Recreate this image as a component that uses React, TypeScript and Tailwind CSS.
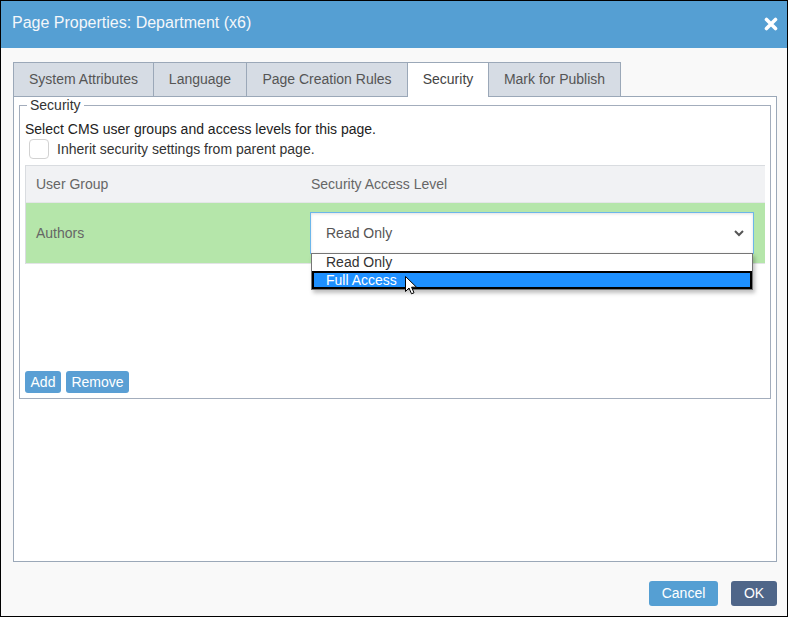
import React from "react"

const tabs = [
  { label: "System Attributes", w: "w-[140px]" },
  { label: "Language", w: "w-[93px]" },
  { label: "Page Creation Rules", w: "w-[161px]" },
  { label: "Security", w: "w-[81px]", active: true },
  { label: "Mark for Publish", w: "w-[133px]", last: true },
]

function Cursor() {
  return (
    <svg
      className="absolute left-[93px] top-[22px] z-20"
      width="13"
      height="19"
      viewBox="0 0 13 19"
    >
      <path
        d="M0.5 0.5 L0.5 15.5 L4 12 L6.5 17.8 L9 16.8 L6.6 11.2 L11.5 11.2 Z"
        fill="#fff"
        stroke="#000"
        strokeWidth="1"
        strokeLinejoin="round"
      />
    </svg>
  )
}

export default function App() {
  return (
    <div className="w-[788px] h-[617px] border border-black bg-[#f9f9f9] flex flex-col font-['Liberation_Sans',Arial,sans-serif] text-[14px]">
      {/* title bar */}
      <div className="h-[47px] shrink-0 bg-[#559fd3] flex items-start justify-between pl-[11px] pr-[9px] pt-[12px]">
        <span className="text-[16px] leading-[20px] text-[#f4f7fa]">
          Page Properties: Department (x6)
        </span>
        <svg className="mt-[4px]" width="14" height="14" viewBox="0 0 14 14">
          <path d="M2.5 2.5 L11.5 11.5 M11.5 2.5 L2.5 11.5" stroke="#fff" strokeWidth="3.6" strokeLinecap="round" />
        </svg>
      </div>

      <div className="flex-1 flex flex-col pl-[12px] pr-[10px] pt-[14px]">
        {/* tabs */}
        <div className="flex items-start h-[34px]">
          {tabs.map((t) => (
            <div
              key={t.label}
              className={
                t.active
                  ? `${t.w} h-[35px] relative z-10 bg-white border-t border-l border-[#9ba8b8] flex items-center justify-center pb-px text-[#444]`
                  : `${t.w} h-[34px] bg-[#d6dce4] border-t border-l border-[#9ba8b8] flex items-center justify-center text-[#555] ${t.last ? "border-r" : ""}`
              }
            >
              {t.label}
            </div>
          ))}
        </div>

        {/* panel */}
        <div className="h-[466px] border border-[#9ba8b8] bg-white px-[5px]">
          <fieldset className="border border-[#a3adbc] px-[5px] pb-[5px]">
            <legend className="ml-[2px] px-[3px] leading-[16px] text-[#333]">Security</legend>
            <div className="mt-[6px] h-[20px] leading-[20px] text-[#222]">
              Select CMS user groups and access levels for this page.
            </div>
            <div className="flex items-center h-[20px] pl-[4px] gap-[8px]">
              <div className="w-[20px] h-[20px] rounded-[4px] border border-[#d2d2d2] bg-white" />
              <span className="text-[#333]">Inherit security settings from parent page.</span>
            </div>

            {/* table */}
            <div className="mt-[6px] border-l border-t border-[#d9dce0]">
              <div className="h-[37px] bg-[#f1f2f4] flex items-center border-b border-[#e4e6e8] text-[#666]">
                <div className="w-[275px] pl-[10px]">User Group</div>
                <div className="pl-[10px]">Security Access Level</div>
              </div>
              <div className="h-[61px] bg-[#b5e6aa] flex items-start pt-[9px] border-b border-[#e2e4e6]">
                <div className="w-[275px] pl-[10px] h-[42px] flex items-center text-[#666]">Authors</div>
                <div className="flex-1 pl-[9px] pr-[11px]">
                  <div className="relative">
                    <div className="h-[42px] border border-[#6cb6ea] bg-white shadow-[inset_0_1px_3px_rgba(0,0,0,0.12)] flex items-center justify-between pl-[15px] pr-[8px] text-[#555]">
                      <span>Read Only</span>
                      <svg width="12" height="8" viewBox="0 0 12 8">
                        <path d="M2 2 L6 6 L10 2" fill="none" stroke="#555" strokeWidth="2" />
                      </svg>
                    </div>
                    <div className="absolute left-[1px] right-[1px] top-[41px] z-10 border border-[#767676] bg-white shadow-[2px_3px_4px_rgba(0,0,0,0.25)]">
                      <div className="h-[17px] leading-[16px] pl-[14px] text-[#333]">Read Only</div>
                      <div className="h-[18px] leading-[14px] pl-[12px] bg-[#1e90ff] border-2 border-black text-white">
                        Full Access
                      </div>
                      <Cursor />
                    </div>
                  </div>
                </div>
              </div>
            </div>

            <div className="mt-[107px] flex gap-[5px]">
              <button className="w-[36px] h-[22px] rounded-[3px] bg-[#5a9fd4] text-white">Add</button>
              <button className="w-[63px] h-[22px] rounded-[3px] bg-[#5a9fd4] text-white">Remove</button>
            </div>
          </fieldset>
        </div>

        {/* footer */}
        <div className="mt-[19px] flex justify-end gap-[13px]">
          <button className="w-[69px] h-[25px] rounded-[3px] bg-[#559fd3] text-white">Cancel</button>
          <button className="w-[46px] h-[25px] rounded-[3px] bg-[#4f6689] text-white">OK</button>
        </div>
      </div>
    </div>
  )
}
